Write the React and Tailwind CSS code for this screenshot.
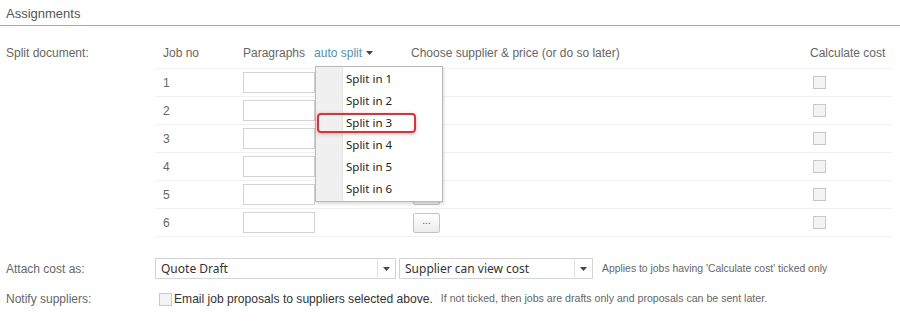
import React from "react";

const rows = [1, 2, 3, 4, 5, 6];
const splits = [1, 2, 3, 4, 5, 6];

function Checkbox({ className = "" }) {
  return <span className={"block w-[13px] h-[13px] border border-[#c8c8c8] bg-[#f3f3f3] " + className} />;
}

function Caret() {
  return (
    <svg width="7" height="4" viewBox="0 0 7 4" className="block">
      <path d="M0 0h7L3.5 4z" fill="#444" />
    </svg>
  );
}

function Select({ value, width }) {
  return (
    <div className={"flex h-[21px] border border-[#d4d4d4] bg-white " + width}>
      <span className="flex-1 pl-[5px] leading-[19px] text-[12px] text-[#333] font-['Noto_Sans',sans-serif]">{value}</span>
      <span className="w-[18px] flex items-center justify-center border-l border-[#e2e2e2]">
        <Caret />
      </span>
    </div>
  );
}

export default function App() {
  return (
    <div className="w-[900px] h-[322px] bg-white font-['Liberation_Sans',Arial,sans-serif] text-[#666] overflow-hidden">
      <div className="h-[26px] border-b border-[#a8a8a8] pl-[6px] pt-[4px] text-[13px] text-[#555]">Assignments</div>

      <div className="flex pt-[11px]">
        <div className="w-[155px] pl-[6px] pt-[7px] text-[12px]">Split document:</div>
        <div className="relative w-[737px]">
          <div className="grid grid-cols-[88px_168px_1fr_82px] h-[32px] items-center text-[12px] border-b border-[#f0f0f0]">
            <span className="pl-[8px]">Job no</span>
            <span className="flex items-center">
              Paragraphs
              <span className="ml-[9px] text-[#5590b5]">auto split</span>
              <span className="ml-[4px]"><Caret /></span>
            </span>
            <span>Choose supplier &amp; price (or do so later)</span>
            <span>Calculate cost</span>
          </div>
          {rows.map((r) => (
            <div key={r} className="grid grid-cols-[88px_170px_1fr_82px] h-[28px] items-center text-[12px] border-b border-[#f0f0f0]">
              <span className="pl-[8px]">{r}</span>
              <span className="block w-[72px] h-[21px] border border-[#d4d4d4] bg-white" />
              <span>
                {r >= 5 && (
                  <span className="flex items-center justify-center w-[27px] h-[20px] border border-[#c4c4c4] rounded-[2px] bg-gradient-to-b from-white to-[#ececec] text-[10px] text-[#555] leading-none pb-[3px]">
                    ...
                  </span>
                )}
              </span>
              <span className="ml-[3px]"><Checkbox /></span>
            </div>
          ))}

          <div className="absolute left-[160px] top-[29px] w-[128px] border border-[#b9b9b9] bg-white shadow-[1px_2px_3px_rgba(0,0,0,0.15)] font-['Noto_Sans',sans-serif] text-[11.5px] text-[#222]">
            <div className="absolute left-0 top-0 bottom-0 w-[27px] bg-[#f0f0f0] border-r border-[#e4e4e4]" />
            <div className="relative py-[1px]">
              {splits.map((s) => (
                <div key={s} className="relative h-[22px] leading-[22px] pl-[30px]">
                  {s === 3 && (
                    <span className="absolute left-[1px] top-[1px] w-[99px] h-[20px] border-2 border-[#d9343a] rounded-[4px] shadow-[0_1px_4px_rgba(200,0,0,0.3)]" />
                  )}
                  <span className="relative">Split in {s}</span>
                </div>
              ))}
            </div>
          </div>
        </div>
      </div>

      <div className="flex items-center mt-[21px] h-[21px]">
        <div className="w-[155px] pl-[6px] text-[12px]">Attach cost as:</div>
        <Select value="Quote Draft" width="w-[241px]" />
        <div className="ml-[3px]"><Select value="Supplier can view cost" width="w-[194px]" /></div>
        <span className="ml-[9px] text-[10.4px]">Applies to jobs having 'Calculate cost' ticked only</span>
      </div>

      <div className="flex items-center mt-[11px] h-[18px]">
        <div className="w-[159px] pl-[6px] text-[12px]">Notify suppliers:</div>
        <Checkbox className="border-[#a9a9a9]" />
        <span className="ml-[2px] text-[12.1px] text-[#333]">Email job proposals to suppliers selected above.</span>
        <span className="ml-[8px] text-[10.6px]">If not ticked, then jobs are drafts only and proposals can be sent later.</span>
      </div>
    </div>
  );
}
